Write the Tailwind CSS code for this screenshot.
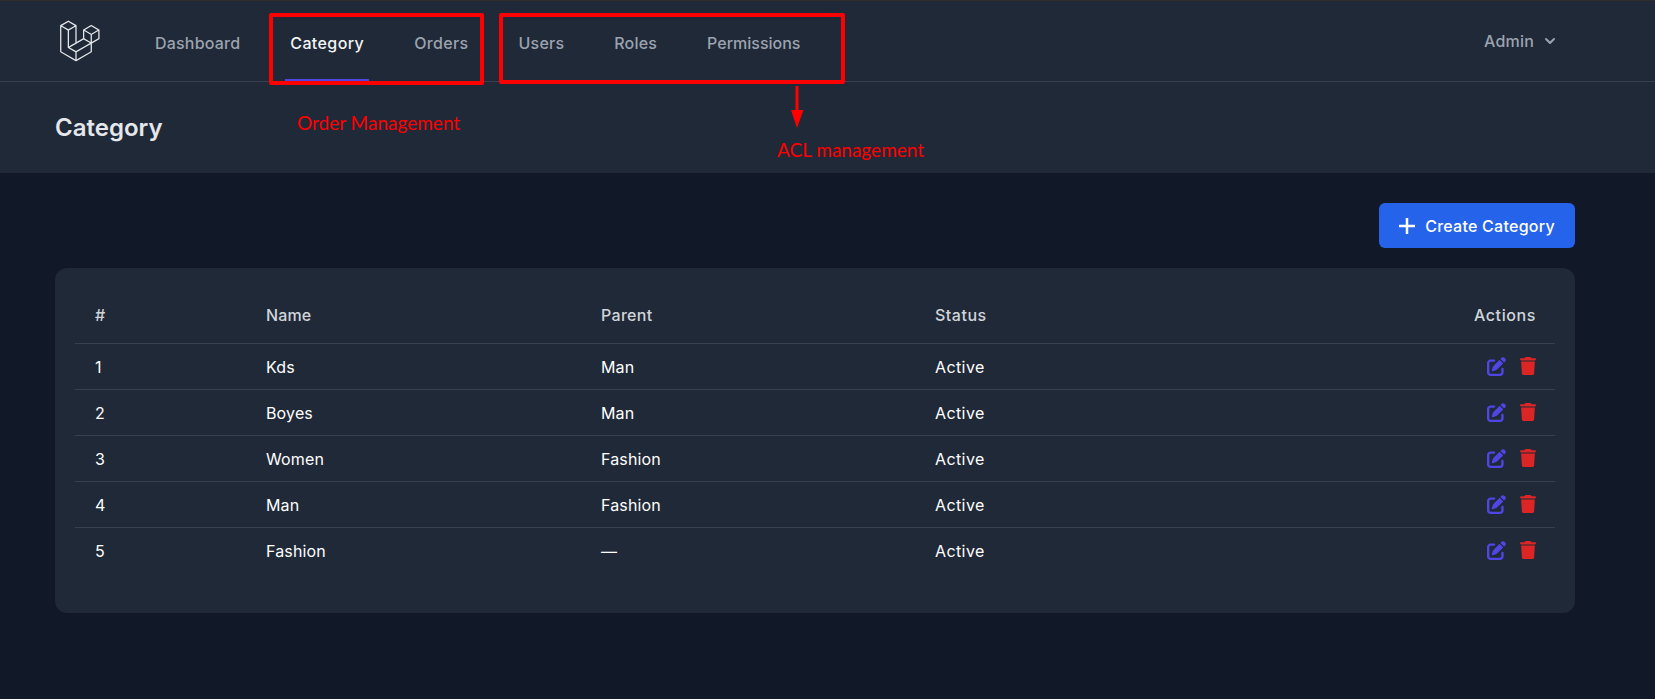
<!DOCTYPE html>
<html>
<head>
<meta charset="utf-8">
<script src="https://cdn.jsdelivr.net/npm/@tailwindcss/browser@4"></script>
</head>
<body class="relative h-[699px] overflow-hidden bg-[#111827] font-['Inter',sans-serif] text-white">
<nav class="flex h-[82px] items-stretch justify-between border-t border-b border-t-[#2d2d2d] border-b-[#374151] bg-[#1f2937] pl-[55px] pr-[95px]">
  <div class="flex items-stretch">
    <div class="flex items-center">
      <svg class="h-[46px] w-[46px] text-[#e5e7eb]" viewBox="0 0 316 316" fill="currentColor"><path d="M305.8 81.125C305.77 80.995 305.69 80.885 305.65 80.755C305.56 80.525 305.49 80.285 305.37 80.075C305.29 79.935 305.17 79.815 305.07 79.685C304.94 79.515 304.83 79.325 304.68 79.175C304.55 79.045 304.39 78.955 304.25 78.845C304.09 78.715 303.95 78.575 303.77 78.475L251.32 48.275C249.97 47.495 248.31 47.495 246.96 48.275L194.51 78.475C194.33 78.575 194.19 78.725 194.03 78.845C193.89 78.955 193.73 79.045 193.6 79.175C193.45 79.325 193.34 79.515 193.21 79.685C193.11 79.815 192.99 79.935 192.91 80.075C192.79 80.285 192.71 80.525 192.63 80.755C192.58 80.875 192.51 80.995 192.48 81.125C192.38 81.495 192.33 81.875 192.33 82.265V139.625L148.62 164.795V52.575C148.62 52.185 148.57 51.805 148.47 51.435C148.44 51.305 148.36 51.195 148.32 51.065C148.23 50.835 148.16 50.595 148.04 50.385C147.96 50.245 147.84 50.125 147.74 49.995C147.61 49.825 147.5 49.635 147.35 49.485C147.22 49.355 147.06 49.265 146.92 49.155C146.76 49.025 146.62 48.885 146.44 48.785L93.99 18.585C92.64 17.805 90.98 17.805 89.63 18.585L37.18 48.785C37 48.885 36.86 49.035 36.7 49.155C36.56 49.265 36.4 49.355 36.27 49.485C36.12 49.635 36.01 49.825 35.88 49.995C35.78 50.125 35.66 50.245 35.58 50.385C35.46 50.595 35.38 50.835 35.3 51.065C35.25 51.185 35.18 51.305 35.15 51.435C35.05 51.805 35 52.185 35 52.575V232.235C35 233.795 35.84 235.245 37.19 236.025L142.1 296.425C142.33 296.555 142.58 296.635 142.83 296.725C142.95 296.765 143.06 296.835 143.18 296.865C143.55 296.965 143.93 297.015 144.31 297.015C144.69 297.015 145.07 296.965 145.44 296.865C145.55 296.835 145.65 296.775 145.76 296.745C146.02 296.655 146.28 296.565 146.52 296.435L251.43 236.035C252.78 235.255 253.62 233.815 253.62 232.245V174.885L303.88 145.945C305.24 145.165 306.07 143.725 306.07 142.155V82.265C305.96 81.875 305.9 81.495 305.8 81.125ZM144.2 227.205L100.57 202.515L146.39 176.135L196.66 147.195L240.33 172.335L208.29 190.625L144.2 227.205ZM244.75 114.995V164.795L226.38 154.225L201.03 139.625V89.825L219.4 100.395L244.75 114.995ZM249.12 57.105L292.81 82.265L249.12 107.425L205.43 82.265L249.12 57.105ZM114.49 184.425L96.12 194.995V85.305L121.47 70.705L139.84 60.135V169.815L114.49 184.425ZM91.76 27.425L135.45 52.585L91.76 77.745L48.07 52.585L91.76 27.425ZM43.67 60.135L62.04 70.705L87.39 85.305V202.545V202.555V202.565C87.39 202.735 87.44 202.895 87.46 203.055C87.49 203.265 87.49 203.485 87.55 203.695V203.705C87.6 203.875 87.69 204.035 87.76 204.195C87.84 204.375 87.89 204.575 87.99 204.745C87.99 204.745 87.99 204.755 88 204.755C88.09 204.905 88.22 205.035 88.33 205.175C88.45 205.335 88.55 205.495 88.69 205.635L88.7 205.645C88.82 205.765 88.98 205.855 89.12 205.965C89.28 206.085 89.42 206.225 89.59 206.325C89.6 206.325 89.6 206.325 89.61 206.335C89.62 206.335 89.62 206.345 89.63 206.345L139.87 234.775V285.065L43.67 229.705V60.135ZM244.75 229.705L148.58 285.075V234.775L219.8 194.115L244.75 179.875V229.705ZM297.2 139.625L253.49 164.795V114.995L278.84 100.395L297.21 89.825V139.625H297.2Z"/></svg>
    </div>
    <div class="ml-[49px] flex items-stretch gap-10 text-base font-medium text-[#9ca3af]">
      <a class="flex items-center border-b-2 border-transparent px-[5px] pt-[5px] tracking-[0.2px]">Dashboard</a>
      <a class="flex items-center border-b-2 border-[#4f46e5] px-[5px] pt-[5px] tracking-[0.4px] text-[#f3f4f6]">Category</a>
      <a class="flex items-center border-b-2 border-transparent px-[5px] pt-[5px] tracking-[0.35px]">Orders</a>
      <a class="flex items-center border-b-2 border-transparent px-[5px] pt-[5px] tracking-[0.2px]">Users</a>
      <a class="flex items-center border-b-2 border-transparent px-[5px] pt-[5px] tracking-[0.2px]">Roles</a>
      <a class="flex items-center border-b-2 border-transparent px-[5px] pt-[5px]">Permissions</a>
    </div>
  </div>
  <div class="flex items-center gap-[6px] text-base font-medium tracking-[0.2px] text-[#9ca3af]">
    <span>Admin</span>
    <svg class="h-5 w-5" viewBox="0 0 20 20" fill="currentColor"><path fill-rule="evenodd" clip-rule="evenodd" d="M5.293 7.293a1 1 0 011.414 0L10 10.586l3.293-3.293a1 1 0 111.414 1.414l-4 4a1 1 0 01-1.414 0l-4-4a1 1 0 010-1.414z"/></svg>
  </div>
</nav>
<header class="flex h-[91px] items-center bg-[#1f2937] px-[55px]">
  <h2 class="text-2xl font-semibold text-[#e5e7eb]">Category</h2>
</header>
<main class="pl-[55px] pr-[80px] pt-[30px]">
  <div class="flex justify-end">
    <button class="flex h-[45px] w-[196px] items-center justify-center gap-[10px] rounded-md bg-[#2563eb] text-base font-medium tracking-[0.25px] text-white">
      <svg class="h-4 w-4" viewBox="0 0 16 16" fill="none" stroke="currentColor" stroke-width="2.5"><path d="M8 0v16M0 8h16"/></svg>
      Create Category
    </button>
  </div>
  <section class="mt-[20px] rounded-xl bg-[#1f2937] px-5 pt-5 pb-10">
    <table class="w-full table-fixed text-left text-base">
      <colgroup><col class="w-[172px]"><col class="w-[335px]"><col class="w-[334px]"><col></colgroup>
      <thead class="text-[#d1d5db]">
        <tr class="h-[55px] border-b border-[#374151]"><th class="pl-[20px] pr-[19px] font-medium">#</th><th class="px-[19px] font-medium tracking-[0.1px]">Name</th><th class="px-[19px] font-medium tracking-[0.3px]">Parent</th><th class="px-[19px] font-medium tracking-[0.5px]">Status</th><th class="px-[19px] text-right font-medium tracking-[0.6px]">Actions</th></tr>
      </thead>
      <tbody class="tracking-[0.15px]">
        <tr class="h-[46px] border-b border-[#374151]"><td class="pl-[20px] pr-[19px] pt-[2px]">1</td><td class="px-[19px] pt-[2px]">Kds</td><td class="px-[19px] pt-[2px]">Man</td><td class="px-[19px] pt-[2px] tracking-[0.4px]">Active</td>
          <td class="px-[19px]"><div class="flex items-center justify-end gap-[14px]"><svg class="h-[19px] w-[19px] text-[#4f46e5]" viewBox="0 0 512 512" fill="currentColor"><path d="M471.6 21.7c-21.9-21.9-57.3-21.9-79.2 0L362.3 51.7l97.9 97.9 30.1-30.1c21.9-21.9 21.9-57.3 0-79.2L471.6 21.7zm-299.2 220c-6.1 6.1-10.8 13.6-13.5 21.9l-29.6 88.8c-2.9 8.6-.6 18.1 5.8 24.6s15.9 8.7 24.6 5.8l88.8-29.6c8.2-2.7 15.7-7.4 21.9-13.5L437.7 172.3 339.7 74.3 172.4 241.7zM96 64C43 64 0 107 0 160V416c0 53 43 96 96 96H352c53 0 96-43 96-96V320c0-17.7-14.3-32-32-32s-32 14.3-32 32v96c0 17.7-14.3 32-32 32H96c-17.7 0-32-14.3-32-32V160c0-17.7 14.3-32 32-32h96c17.7 0 32-14.3 32-32s-14.3-32-32-32H96z"/></svg><svg class="h-[18px] w-[16px] text-[#dc2626]" viewBox="0 0 448 512" preserveAspectRatio="none" fill="currentColor"><path d="M135.2 17.7L128 32H32C14.3 32 0 46.3 0 64S14.3 96 32 96H416c17.7 0 32-14.3 32-32s-14.3-32-32-32H320l-7.2-14.3C307.4 6.8 296.3 0 284.2 0H163.8c-12.1 0-23.2 6.8-28.6 17.7zM416 128H32L53.2 467c1.6 25.3 22.6 45 47.9 45H346.9c25.3 0 46.3-19.7 47.9-45L416 128z"/></svg></div></td></tr>
        <tr class="h-[46px] border-b border-[#374151]"><td class="pl-[20px] pr-[19px] pt-[2px]">2</td><td class="px-[19px] pt-[2px]">Boyes</td><td class="px-[19px] pt-[2px]">Man</td><td class="px-[19px] pt-[2px] tracking-[0.4px]">Active</td>
          <td class="px-[19px]"><div class="flex items-center justify-end gap-[14px]"><svg class="h-[19px] w-[19px] text-[#4f46e5]" viewBox="0 0 512 512" fill="currentColor"><path d="M471.6 21.7c-21.9-21.9-57.3-21.9-79.2 0L362.3 51.7l97.9 97.9 30.1-30.1c21.9-21.9 21.9-57.3 0-79.2L471.6 21.7zm-299.2 220c-6.1 6.1-10.8 13.6-13.5 21.9l-29.6 88.8c-2.9 8.6-.6 18.1 5.8 24.6s15.9 8.7 24.6 5.8l88.8-29.6c8.2-2.7 15.7-7.4 21.9-13.5L437.7 172.3 339.7 74.3 172.4 241.7zM96 64C43 64 0 107 0 160V416c0 53 43 96 96 96H352c53 0 96-43 96-96V320c0-17.7-14.3-32-32-32s-32 14.3-32 32v96c0 17.7-14.3 32-32 32H96c-17.7 0-32-14.3-32-32V160c0-17.7 14.3-32 32-32h96c17.7 0 32-14.3 32-32s-14.3-32-32-32H96z"/></svg><svg class="h-[18px] w-[16px] text-[#dc2626]" viewBox="0 0 448 512" preserveAspectRatio="none" fill="currentColor"><path d="M135.2 17.7L128 32H32C14.3 32 0 46.3 0 64S14.3 96 32 96H416c17.7 0 32-14.3 32-32s-14.3-32-32-32H320l-7.2-14.3C307.4 6.8 296.3 0 284.2 0H163.8c-12.1 0-23.2 6.8-28.6 17.7zM416 128H32L53.2 467c1.6 25.3 22.6 45 47.9 45H346.9c25.3 0 46.3-19.7 47.9-45L416 128z"/></svg></div></td></tr>
        <tr class="h-[46px] border-b border-[#374151]"><td class="pl-[20px] pr-[19px] pt-[2px]">3</td><td class="px-[19px] pt-[2px]">Women</td><td class="px-[19px] pt-[2px]">Fashion</td><td class="px-[19px] pt-[2px] tracking-[0.4px]">Active</td>
          <td class="px-[19px]"><div class="flex items-center justify-end gap-[14px]"><svg class="h-[19px] w-[19px] text-[#4f46e5]" viewBox="0 0 512 512" fill="currentColor"><path d="M471.6 21.7c-21.9-21.9-57.3-21.9-79.2 0L362.3 51.7l97.9 97.9 30.1-30.1c21.9-21.9 21.9-57.3 0-79.2L471.6 21.7zm-299.2 220c-6.1 6.1-10.8 13.6-13.5 21.9l-29.6 88.8c-2.9 8.6-.6 18.1 5.8 24.6s15.9 8.7 24.6 5.8l88.8-29.6c8.2-2.7 15.7-7.4 21.9-13.5L437.7 172.3 339.7 74.3 172.4 241.7zM96 64C43 64 0 107 0 160V416c0 53 43 96 96 96H352c53 0 96-43 96-96V320c0-17.7-14.3-32-32-32s-32 14.3-32 32v96c0 17.7-14.3 32-32 32H96c-17.7 0-32-14.3-32-32V160c0-17.7 14.3-32 32-32h96c17.7 0 32-14.3 32-32s-14.3-32-32-32H96z"/></svg><svg class="h-[18px] w-[16px] text-[#dc2626]" viewBox="0 0 448 512" preserveAspectRatio="none" fill="currentColor"><path d="M135.2 17.7L128 32H32C14.3 32 0 46.3 0 64S14.3 96 32 96H416c17.7 0 32-14.3 32-32s-14.3-32-32-32H320l-7.2-14.3C307.4 6.8 296.3 0 284.2 0H163.8c-12.1 0-23.2 6.8-28.6 17.7zM416 128H32L53.2 467c1.6 25.3 22.6 45 47.9 45H346.9c25.3 0 46.3-19.7 47.9-45L416 128z"/></svg></div></td></tr>
        <tr class="h-[46px] border-b border-[#374151]"><td class="pl-[20px] pr-[19px] pt-[2px]">4</td><td class="px-[19px] pt-[2px]">Man</td><td class="px-[19px] pt-[2px]">Fashion</td><td class="px-[19px] pt-[2px] tracking-[0.4px]">Active</td>
          <td class="px-[19px]"><div class="flex items-center justify-end gap-[14px]"><svg class="h-[19px] w-[19px] text-[#4f46e5]" viewBox="0 0 512 512" fill="currentColor"><path d="M471.6 21.7c-21.9-21.9-57.3-21.9-79.2 0L362.3 51.7l97.9 97.9 30.1-30.1c21.9-21.9 21.9-57.3 0-79.2L471.6 21.7zm-299.2 220c-6.1 6.1-10.8 13.6-13.5 21.9l-29.6 88.8c-2.9 8.6-.6 18.1 5.8 24.6s15.9 8.7 24.6 5.8l88.8-29.6c8.2-2.7 15.7-7.4 21.9-13.5L437.7 172.3 339.7 74.3 172.4 241.7zM96 64C43 64 0 107 0 160V416c0 53 43 96 96 96H352c53 0 96-43 96-96V320c0-17.7-14.3-32-32-32s-32 14.3-32 32v96c0 17.7-14.3 32-32 32H96c-17.7 0-32-14.3-32-32V160c0-17.7 14.3-32 32-32h96c17.7 0 32-14.3 32-32s-14.3-32-32-32H96z"/></svg><svg class="h-[18px] w-[16px] text-[#dc2626]" viewBox="0 0 448 512" preserveAspectRatio="none" fill="currentColor"><path d="M135.2 17.7L128 32H32C14.3 32 0 46.3 0 64S14.3 96 32 96H416c17.7 0 32-14.3 32-32s-14.3-32-32-32H320l-7.2-14.3C307.4 6.8 296.3 0 284.2 0H163.8c-12.1 0-23.2 6.8-28.6 17.7zM416 128H32L53.2 467c1.6 25.3 22.6 45 47.9 45H346.9c25.3 0 46.3-19.7 47.9-45L416 128z"/></svg></div></td></tr>
        <tr class="h-[46px]"><td class="pl-[20px] pr-[19px] pt-[2px]">5</td><td class="px-[19px] pt-[2px]">Fashion</td><td class="px-[19px] pt-[2px]">—</td><td class="px-[19px] pt-[2px] tracking-[0.4px]">Active</td>
          <td class="px-[19px]"><div class="flex items-center justify-end gap-[14px]"><svg class="h-[19px] w-[19px] text-[#4f46e5]" viewBox="0 0 512 512" fill="currentColor"><path d="M471.6 21.7c-21.9-21.9-57.3-21.9-79.2 0L362.3 51.7l97.9 97.9 30.1-30.1c21.9-21.9 21.9-57.3 0-79.2L471.6 21.7zm-299.2 220c-6.1 6.1-10.8 13.6-13.5 21.9l-29.6 88.8c-2.9 8.6-.6 18.1 5.8 24.6s15.9 8.7 24.6 5.8l88.8-29.6c8.2-2.7 15.7-7.4 21.9-13.5L437.7 172.3 339.7 74.3 172.4 241.7zM96 64C43 64 0 107 0 160V416c0 53 43 96 96 96H352c53 0 96-43 96-96V320c0-17.7-14.3-32-32-32s-32 14.3-32 32v96c0 17.7-14.3 32-32 32H96c-17.7 0-32-14.3-32-32V160c0-17.7 14.3-32 32-32h96c17.7 0 32-14.3 32-32s-14.3-32-32-32H96z"/></svg><svg class="h-[18px] w-[16px] text-[#dc2626]" viewBox="0 0 448 512" preserveAspectRatio="none" fill="currentColor"><path d="M135.2 17.7L128 32H32C14.3 32 0 46.3 0 64S14.3 96 32 96H416c17.7 0 32-14.3 32-32s-14.3-32-32-32H320l-7.2-14.3C307.4 6.8 296.3 0 284.2 0H163.8c-12.1 0-23.2 6.8-28.6 17.7zM416 128H32L53.2 467c1.6 25.3 22.6 45 47.9 45H346.9c25.3 0 46.3-19.7 47.9-45L416 128z"/></svg></div></td></tr>
      </tbody>
    </table>
  </section>
</main>
<!-- red annotations drawn over the page -->
<div class="absolute left-[269px] top-[13px] h-[72px] w-[215px] rounded-[2px] border-[4px] border-[#ff0000]"></div>
<div class="absolute left-[499px] top-[13px] h-[71px] w-[346px] rounded-[2px] border-[4px] border-[#ff0000]"></div>
<svg class="absolute left-[790px] top-[86px] h-[42px] w-[14px]" viewBox="0 0 14 42" fill="#ff0000"><path d="M5.5 0h3v24h5L7 42 1 24h4.500z"/></svg>
<span class="absolute left-[297px] top-[112px] font-['Lato',sans-serif] text-[19px] leading-[22px] text-[#ff0000]">Order Management</span>
<span class="absolute left-[777px] top-[139px] font-['Lato',sans-serif] text-[19px] leading-[22px] text-[#ff0000]">ACL management</span>
</body>
</html>
